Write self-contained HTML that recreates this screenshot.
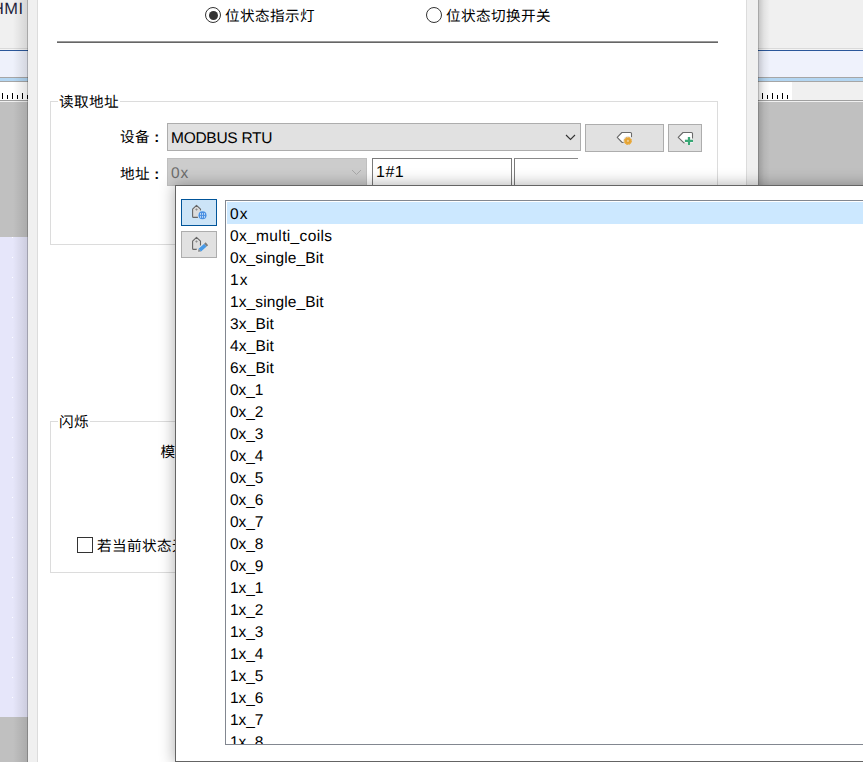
<!DOCTYPE html>
<html lang="zh-CN">
<head>
<meta charset="utf-8">
<title>位状态指示灯</title>
<style>
*{box-sizing:border-box;margin:0;padding:0}
html,body{width:863px;height:762px;overflow:hidden;background:#f0f0f0}
body{position:relative;text-rendering:geometricPrecision;font-family:"Liberation Sans","Noto Sans CJK SC",sans-serif;font-size:15px;color:#000;line-height:1}
.abs{position:absolute}
/* background app window */
#bgL{left:0;top:0;width:28px;height:762px;overflow:hidden}
#bgR{left:758px;top:0;width:105px;height:762px;overflow:hidden}
.band{position:absolute;left:0;right:0}
.hmi{position:absolute;left:-8px;top:1px;font-size:16.4px;letter-spacing:0.5px;color:#1e1e3c;white-space:nowrap}
.tick{position:absolute;width:1px;background:#000}
.dot{position:absolute;left:12px;width:1px;height:1px;background:#fff}
/* dialog */
#dlg{left:28px;top:-10px;width:730px;height:800px;background:#f0f0f0}
#dlgIn{left:37px;top:-10px;width:710px;height:800px;background:#fff;border-left:1px solid #dcdcdc;border-right:1px solid #dcdcdc}
.shL{left:13px;top:0;width:15px;height:762px;background:linear-gradient(to right,rgba(0,0,0,0) 0,rgba(0,0,0,0.11) 14px,rgba(0,0,0,0.30) 14px,rgba(0,0,0,0.30) 15px)}
.shR{left:758px;top:0;width:12px;height:185px;background:linear-gradient(to right,rgba(0,0,0,0.30) 0,rgba(0,0,0,0.30) 1px,rgba(0,0,0,0.17) 1px,rgba(0,0,0,0.06) 6px,rgba(0,0,0,0) 12px)}
.radio{width:16px;height:16px;border:1px solid #333;border-radius:50%;background:#fff}
.radio.on::after{content:"";position:absolute;left:2.5px;top:2.5px;width:9px;height:9px;border-radius:50%;background:#333}
.t{position:absolute;white-space:nowrap;line-height:20px;height:20px}
.cj{font-size:14.6px;letter-spacing:0.4px}
.hr{left:57px;top:41px;width:661px;height:2px;background:linear-gradient(#9a9a9a 0,#9a9a9a 50%,#666 50%,#666 100%)}
.fs{border:1px solid #dcdcdc}
.lg{background:#fff;padding:0 1px}
.sel{background:#e1e1e1;border:1px solid #adadad}
.sel.dis{background:#cccccc;border-color:#bfbfbf;color:#6d6d6d}
.btn{background:#e1e1e1;border:1px solid #adadad}
.inp{background:#fff;border:1px solid #7a7a7a}
/* popup */
#pop{left:175px;top:185px;width:700px;height:577px;background:#fff;border:1px solid #646464;box-shadow:0 0 14px 1px rgba(0,0,0,0.30)}
#list{left:225px;top:200px;width:650px;height:545px;border:1px solid #828790;background:#fff;overflow:hidden}
.row{position:absolute;left:1px;right:0;height:22px;line-height:26px;padding-left:3px;white-space:nowrap;font-size:15.5px;text-rendering:geometricPrecision}
.r2{letter-spacing:1.2px}.rm{letter-spacing:0.36px}.rs{letter-spacing:0.12px}.rb{letter-spacing:0.16px}.rn{letter-spacing:-0.1px}
.row.on{background:#cce8ff}
</style>
</head>
<body>
<!-- left background -->
<div class="abs" id="bgL">
  <div class="band" style="top:0;height:48px;background:#f0f0f0"></div>
  <div class="hmi">HMI</div>
  <div class="band" style="top:48px;height:1px;background:#dadada"></div>
  <div class="band" style="top:49px;height:1px;background:#f4f4f4"></div>
  <div class="band" style="top:50px;height:1px;background:#2b579a"></div>
  <div class="band" style="top:51px;height:26px;background:#eef1fb"></div>
  <div class="band" style="top:77px;height:1px;background:#a6a6a6"></div>
  <div class="band" style="top:78px;height:3px;background:#b3d6f2"></div>
  <div class="band" style="top:81px;height:1px;background:#a6a6a6"></div>
  <div class="band" style="top:82px;height:18px;background:#fff"></div>
  <div class="tick" style="left:2px;top:93px;height:6px"></div><div class="tick" style="left:7px;top:95px;height:4px"></div><div class="tick" style="left:12px;top:93px;height:6px"></div><div class="tick" style="left:17px;top:95px;height:4px"></div><div class="tick" style="left:22px;top:93px;height:6px"></div>
  <div class="band" style="top:100px;height:1px;background:#a0a0a0"></div><div class="band" style="top:101px;height:1px;background:#f0f0f0"></div>
  <div class="band" style="top:102px;height:135px;background:#c0c0c0"></div>
  <div class="band" style="top:237px;height:480px;background:#e6e6fa"></div>
<div class="dot" style="top:237px"></div><div class="dot" style="top:257px"></div><div class="dot" style="top:277px"></div><div class="dot" style="top:297px"></div><div class="dot" style="top:317px"></div><div class="dot" style="top:337px"></div><div class="dot" style="top:357px"></div><div class="dot" style="top:377px"></div><div class="dot" style="top:397px"></div><div class="dot" style="top:417px"></div><div class="dot" style="top:437px"></div><div class="dot" style="top:457px"></div><div class="dot" style="top:477px"></div><div class="dot" style="top:497px"></div><div class="dot" style="top:517px"></div><div class="dot" style="top:537px"></div><div class="dot" style="top:557px"></div><div class="dot" style="top:577px"></div><div class="dot" style="top:597px"></div><div class="dot" style="top:617px"></div><div class="dot" style="top:637px"></div><div class="dot" style="top:657px"></div><div class="dot" style="top:677px"></div><div class="dot" style="top:697px"></div>
  <div class="band" style="top:717px;height:45px;background:#c0c0c0"></div>
</div>
<!-- right background -->
<div class="abs" id="bgR">
  <div class="band" style="top:0;height:48px;background:#f0f0f0"></div>
  <div class="band" style="top:48px;height:1px;background:#dadada"></div>
  <div class="band" style="top:49px;height:1px;background:#f4f4f4"></div>
  <div class="band" style="top:50px;height:1px;background:#2b579a"></div>
  <div class="band" style="top:51px;height:26px;background:#eff2fc"></div>
  <div class="band" style="top:77px;height:1px;background:#a6a6a6"></div>
  <div class="band" style="top:78px;height:3px;background:#b3d6f2"></div>
  <div class="band" style="top:81px;height:1px;background:#a6a6a6"></div>
  <div class="band" style="top:82px;height:18px;background:#f0f0f0"></div>
  <div class="band" style="top:82px;height:18px;width:34px;background:#fff"></div>
  <div class="tick" style="left:4px;top:93px;height:6px"></div><div class="tick" style="left:9px;top:95px;height:4px"></div><div class="tick" style="left:14px;top:93px;height:6px"></div><div class="tick" style="left:19px;top:95px;height:4px"></div><div class="tick" style="left:24px;top:93px;height:6px"></div><div class="tick" style="left:29px;top:95px;height:4px"></div>
  <div class="band" style="top:100px;height:1px;background:#a0a0a0"></div><div class="band" style="top:101px;height:1px;background:#f0f0f0"></div>
  <div class="band" style="top:102px;height:89px;background:#c0c0c0"></div>
</div>
<div class="abs shL"></div>
<div class="abs shR"></div>

<!-- dialog -->
<div class="abs" id="dlg"></div>
<div class="abs" id="dlgIn"></div>
<div class="tick" style="left:27px;top:95px;height:4px"></div>

<div class="abs radio on" style="left:205px;top:7px"></div>
<div class="t cj" style="left:225px;top:6.5px">位状态指示灯</div>
<div class="abs radio" style="left:426px;top:7px"></div>
<div class="t cj" style="left:446px;top:6.5px">位状态切换开关</div>
<div class="abs hr"></div>

<!-- fieldset 1 -->
<div class="abs fs" style="left:50px;top:101px;width:668px;height:144px"></div>
<div class="t lg cj" style="left:58px;top:92.8px">读取地址</div>
<div class="t" style="left:120px;top:127.7px"><span class="cj">设备</span> <b>:</b></div>
<div class="abs sel" style="left:167px;top:123px;width:414px;height:28px"></div>
<div class="t" style="left:171px;top:128.6px;font-size:15.5px;letter-spacing:-0.27px">MODBUS RTU</div>
<div class="abs btn" style="left:585px;top:124px;width:79px;height:28px"></div>
<div class="abs btn" style="left:668px;top:124px;width:34px;height:28px"></div>
<div class="t" style="left:120px;top:164.6px"><span class="cj">地址</span> <b>:</b></div>
<div class="abs sel dis" style="left:167px;top:158px;width:200px;height:28px"></div>
<div class="t" style="left:171px;top:163.8px;color:#6d6d6d;font-size:15.5px;letter-spacing:0.9px">0x</div>
<div class="abs inp" style="left:372px;top:158px;width:140px;height:28px"></div>
<div class="t" style="left:376px;top:162.5px;font-size:16px;letter-spacing:0.5px">1#1</div>
<div class="abs inp" style="left:514px;top:158px;width:64px;height:28px;border-right:none;border-top-color:#8a8a8a"></div>

<!-- fieldset 2 -->
<div class="abs fs" style="left:50px;top:421px;width:668px;height:152px"></div>
<div class="t lg cj" style="left:58px;top:412.8px">闪烁</div>
<div class="t" style="left:160.4px;top:443.2px"><span class="cj">模式</span> <b>:</b></div>
<div class="abs" style="left:77px;top:537px;width:16px;height:16px;border:1px solid #333;background:#fff"></div>
<div class="t cj" style="left:97px;top:536.8px">若当前状态无对应图片时隐藏图片</div>

<!-- popup -->
<div class="abs" id="pop"></div>
<div class="abs" style="left:181px;top:199px;width:36px;height:27px;background:#cce4f7;border:1px solid #005499"></div>
<div class="abs btn" style="left:181px;top:231px;width:36px;height:27px"></div>
<div class="abs" id="list">
  <div class="row on r2" style="top:1px">0x</div>
  <div class="row rm" style="top:23px">0x_multi_coils</div>
  <div class="row rs" style="top:45px">0x_single_Bit</div>
  <div class="row r2" style="top:67px">1x</div>
  <div class="row rs" style="top:89px">1x_single_Bit</div>
  <div class="row rb" style="top:111px">3x_Bit</div>
  <div class="row rb" style="top:133px">4x_Bit</div>
  <div class="row rb" style="top:155px">6x_Bit</div>
  <div class="row rn" style="top:177px">0x_1</div>
  <div class="row rn" style="top:199px">0x_2</div>
  <div class="row rn" style="top:221px">0x_3</div>
  <div class="row rn" style="top:243px">0x_4</div>
  <div class="row rn" style="top:265px">0x_5</div>
  <div class="row rn" style="top:287px">0x_6</div>
  <div class="row rn" style="top:309px">0x_7</div>
  <div class="row rn" style="top:331px">0x_8</div>
  <div class="row rn" style="top:353px">0x_9</div>
  <div class="row rn" style="top:375px">1x_1</div>
  <div class="row rn" style="top:397px">1x_2</div>
  <div class="row rn" style="top:419px">1x_3</div>
  <div class="row rn" style="top:441px">1x_4</div>
  <div class="row rn" style="top:463px">1x_5</div>
  <div class="row rn" style="top:485px">1x_6</div>
  <div class="row rn" style="top:507px">1x_7</div>
  <div class="row rn" style="top:529px">1x_8</div>
</div>

<!-- icons -->
<svg class="abs" style="left:0;top:0;pointer-events:none" width="863" height="762" viewBox="0 0 863 762">
  <!-- chevrons -->
  <path d="M566 135 L570.5 139.5 L575 135" fill="none" stroke="#333" stroke-width="1.1"/>
  <path d="M352 170 L356.5 174.5 L361 170" fill="none" stroke="#a6a6a6" stroke-width="1"/>
  <!-- tag + gear -->
  <path d="M624.5 142.5 L622.2 142.5 L617.2 137.4 L621.9 132.5 L630.5 132.5 Q631.5 132.5 631.5 133.5 L631.5 137.5 L631.5 142.5 Z" fill="#fff" stroke="none"/>
  <path d="M624.5 142.5 L622.2 142.5 L617.2 137.4 L621.9 132.5 L630.5 132.5 Q631.5 132.5 631.5 133.5 L631.5 137.2" fill="none" stroke="#6a6a6a" stroke-width="1.1" stroke-linejoin="round"/>
  <circle cx="627.9" cy="140.9" r="4.7" fill="#e1e1e1"/>
  <circle cx="627.9" cy="140.9" r="3.5" fill="#e9a93b"/>
  <circle cx="627.9" cy="140.9" r="3.6" fill="none" stroke="#e9a93b" stroke-width="1" stroke-dasharray="1.7 1.127"/>
  <circle cx="627.9" cy="140.9" r="2" fill="none" stroke="#dd9c2c" stroke-width="0.7"/>
  <circle cx="627.9" cy="140.9" r="1.1" fill="#ecc98d"/>
  <!-- tag + plus -->
  <path d="M686 142.7 L683.7 142.7 L678.2 137.4 L683 132.5 L691.5 132.5 Q692.5 132.5 692.5 133.5 L692.5 142.7 Z" fill="#fff" stroke="none"/>
  <path d="M684.6 142.9 L683.7 142.7 L678.2 137.4 L683 132.5 L691.5 132.5 Q692.5 132.5 692.5 133.5 L692.5 138.6" fill="none" stroke="#6a6a6a" stroke-width="1.1" stroke-linejoin="round"/>
  <path d="M684.9 140.9 H693 M689 136.9 V145" stroke="#f4f4f4" stroke-width="3.6" fill="none"/>
  <path d="M684.9 140.9 H693 M689 136.9 V145" stroke="#3aa776" stroke-width="2.2" fill="none"/>
  <!-- popup icon 1: tag + globe -->
  <path d="M197.9 217.4 L193.6 217.4 Q192.6 217.4 192.6 216.4 L192.6 209.2 L196.5 205.3 L200.5 209.2 L200.5 217.4 Z" fill="#dcdcdc" stroke="none"/>
  <path d="M197.9 217.4 L193.6 217.4 Q192.6 217.4 192.6 216.4 L192.6 209.2 L196.5 205.3 L200.5 209.2 L200.5 210.6" fill="none" stroke="#666" stroke-width="1.1" stroke-linejoin="round"/>
  <path d="M196.5 208.2 L197.8 209.5 L196.5 210.8 L195.2 209.5 Z" fill="#8c8c8c"/>
  <circle cx="202.5" cy="215.3" r="4.7" fill="#cce4f7"/>
  <circle cx="202.5" cy="215.3" r="4" fill="#4a90e2"/>
  <g fill="#b9d6f5">
    <rect x="200" y="213" width="1" height="1.9"/><rect x="202" y="213" width="1" height="1.9"/><rect x="204" y="213" width="1" height="1.9"/>
    <rect x="200" y="215.9" width="1" height="1.9"/><rect x="202" y="215.9" width="1" height="1.9"/><rect x="204" y="215.9" width="1" height="1.9"/>
  </g>
  <!-- popup icon 2: tag + pencil -->
  <path d="M197.2 249.4 L193.6 249.4 Q192.6 249.4 192.6 248.4 L192.6 241.2 L196.5 237.3 L200.5 241.2 L200.5 249.4 Z" fill="#dedede" stroke="none"/>
  <path d="M197.2 249.4 L193.6 249.4 Q192.6 249.4 192.6 248.4 L192.6 241.2 L196.5 237.3 L200.5 241.2 L200.5 245.4" fill="none" stroke="#666" stroke-width="1.1" stroke-linejoin="round"/>
  <path d="M196.5 240.2 L197.8 241.5 L196.5 242.8 L195.2 241.5 Z" fill="#8c8c8c"/>
  <g transform="translate(198 251.8) rotate(-42)">
    <rect x="-0.6" y="-2.5" width="13.2" height="5" fill="#e6e6e6"/>
    <path d="M0 0 L2.4 -1.9 L2.4 1.9 Z" fill="#8a8a8a"/>
    <rect x="2.4" y="-1.9" width="7.6" height="3.8" fill="#4799e6"/>
    <rect x="10" y="-1.9" width="2" height="3.8" fill="#7d7d7d"/>
  </g>
</svg>
</body>
</html>
